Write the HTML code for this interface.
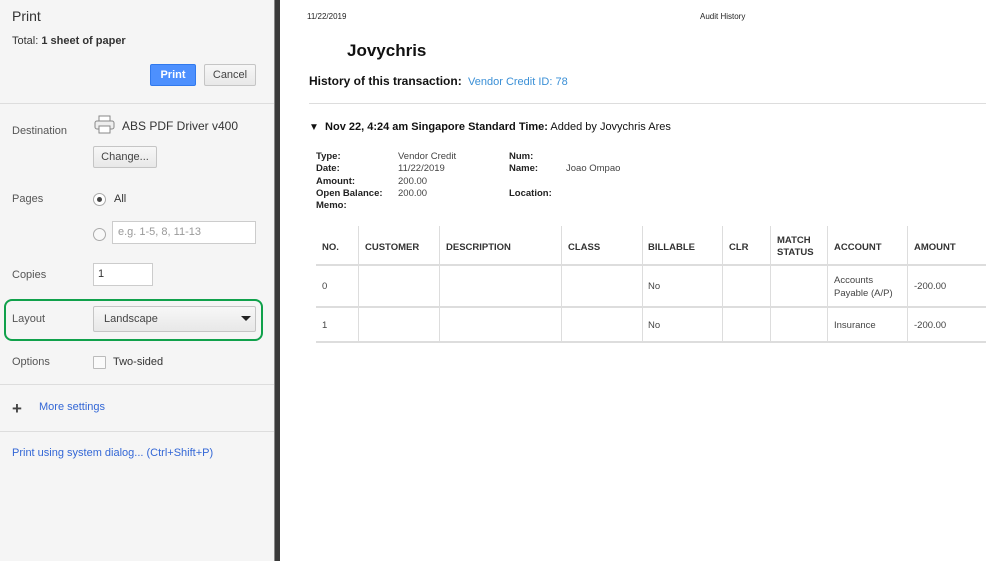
<!DOCTYPE html>
<html><head><style>
body{margin:0;width:988px;height:561px;overflow:hidden;background:#fff;font-family:"Liberation Sans",Arial,sans-serif;position:relative}
.a{position:absolute;white-space:nowrap}
#left{position:absolute;left:0;top:0;width:274px;height:561px;background:#f5f5f5;color:#333;font-size:11px}
.lbl{color:#555}
.btn{position:absolute;border:1px solid #c5c5c5;border-radius:2px;background:linear-gradient(#f7f7f7,#e8e8e8);font-size:11px;color:#444;text-align:center;box-sizing:border-box}
.hr{position:absolute;left:0;width:274px;height:1px;background:#ddd}
.r{font-size:9.5px;color:#444}
.b{font-weight:bold;color:#222}
.th{font-size:9.5px;font-weight:bold;color:#333}
.vl{position:absolute;width:1px;background:#ddd;top:226px;height:116px}
.hl{position:absolute;left:316px;width:670px;height:2px;background:#ddd}
</style></head><body>
<div id="left">
<div class="a" style="left:12px;top:8px;font-size:14px;color:#333">Print</div>
<div class="a" style="left:12px;top:35px">Total: <b>1 sheet of paper</b></div>
<div class="btn" style="left:150px;top:64px;width:46px;height:22px;background:#4d90fe;border-color:#3079ed;color:#fff;font-weight:bold;line-height:20px">Print</div>
<div class="btn" style="left:204px;top:64px;width:52px;height:22px;line-height:20px">Cancel</div>
<div class="hr" style="top:103px"></div>
<div class="a lbl" style="left:12px;top:125px">Destination</div>
<svg class="a" style="left:94px;top:115px" width="22" height="20" viewBox="0 0 22 20"><rect x="5" y="1" width="11" height="5" fill="#fff" stroke="#888"/><rect x="1" y="6" width="19" height="8" rx="2" fill="#eee" stroke="#888"/><rect x="5" y="11" width="11" height="7" fill="#fff" stroke="#888"/></svg>
<div class="a" style="left:122px;top:119px;font-size:12px">ABS PDF Driver v400</div>
<div class="btn" style="left:93px;top:146px;width:64px;height:22px;line-height:20px">Change...</div>
<div class="a lbl" style="left:12px;top:193px">Pages</div>
<div class="a" style="left:93px;top:193px;width:11px;height:11px;border:1px solid #aaa;border-radius:50%;background:#fff"><div style="margin:3px;width:5px;height:5px;border-radius:50%;background:#444"></div></div>
<div class="a" style="left:114px;top:193px">All</div>
<div class="a" style="left:93px;top:228px;width:11px;height:11px;border:1px solid #aaa;border-radius:50%;background:#f8f8f8"></div>
<div class="a" style="left:112px;top:221px;border:1px solid #ccc;background:#fff;color:#999;font-size:11px;line-height:21px;padding-left:5px;box-sizing:border-box;width:144px;height:23px">e.g. 1-5, 8, 11-13</div>
<div class="a lbl" style="left:12px;top:269px">Copies</div>
<div class="a" style="left:93px;top:263px;width:60px;height:23px;border:1px solid #ccc;background:#fff;box-sizing:border-box;padding-left:4px;line-height:21px">1</div>
<div class="a" style="left:4px;top:299px;width:255px;height:38px;border:2px solid #10a14b;border-radius:8px"></div>
<div class="a lbl" style="left:12px;top:313px">Layout</div>
<div class="btn" style="left:93px;top:306px;width:163px;height:26px;text-align:left;padding-left:10px;line-height:24px">Landscape</div>
<div class="a" style="left:241px;top:316px;width:0;height:0;border-left:5px solid transparent;border-right:5px solid transparent;border-top:5px solid #222"></div>
<div class="a lbl" style="left:12px;top:356px">Options</div>
<div class="a" style="left:93px;top:356px;width:11px;height:11px;border:1px solid #bbb;background:#fafafa;border-radius:1px"></div>
<div class="a" style="left:113px;top:356px">Two-sided</div>
<div class="hr" style="top:384px"></div>
<div class="a" style="left:12px;top:399px;font-size:17px;font-weight:bold;color:#444">+</div>
<div class="a" style="left:39px;top:401px;color:#3367d6">More settings</div>
<div class="hr" style="top:431px"></div>
<div class="a" style="left:12px;top:447px;color:#3367d6">Print using system dialog... (Ctrl+Shift+P)</div>
</div>
<div class="a" style="left:274px;top:0;width:6px;height:561px;background:#3a3a3a;border-left:1px solid #888;box-sizing:border-box"></div>
<div class="a" style="left:307px;top:12px;font-size:8px;color:#222">11/22/2019</div>
<div class="a" style="left:700px;top:12px;font-size:8px;color:#222">Audit History</div>
<div class="a" style="left:347px;top:41px;font-size:17px;font-weight:bold;color:#111">Jovychris</div>
<div class="a" style="left:309px;top:74px;font-size:12px;font-weight:bold;color:#111">History of this transaction: <span style="font-weight:normal;color:#3a8fd6;font-size:11px;margin-left:3px">Vendor Credit ID: 78</span></div>
<div class="a" style="left:309px;top:103px;width:677px;height:1px;background:#ddd"></div>
<div class="a" style="left:309px;top:121px;font-size:11px;color:#111"><span style="font-size:10px">▼</span>&nbsp; <b>Nov 22, 4:24 am Singapore Standard Time:</b> Added by Jovychris Ares</div>
<div class="a r b" style="left:316px;top:151px;line-height:12.3px">Type:<br>Date:<br>Amount:<br>Open Balance:<br>Memo:</div>
<div class="a r" style="left:398px;top:151px;line-height:12.3px">Vendor Credit<br>11/22/2019<br>200.00<br>200.00</div>
<div class="a r b" style="left:509px;top:151px;line-height:12.3px">Num:<br>Name:<br><br>Location:</div>
<div class="a r" style="left:566px;top:163px">Joao Ompao</div>
<div class="vl" style="left:358px"></div><div class="vl" style="left:439px"></div><div class="vl" style="left:561px"></div><div class="vl" style="left:642px"></div><div class="vl" style="left:722px"></div><div class="vl" style="left:770px"></div><div class="vl" style="left:827px"></div><div class="vl" style="left:907px"></div>
<div class="hl" style="top:264px"></div><div class="hl" style="top:306px"></div><div class="hl" style="top:341px"></div>
<div class="a th" style="left:322px;top:242px">NO.</div>
<div class="a th" style="left:365px;top:242px">CUSTOMER</div>
<div class="a th" style="left:446px;top:242px">DESCRIPTION</div>
<div class="a th" style="left:568px;top:242px">CLASS</div>
<div class="a th" style="left:648px;top:242px">BILLABLE</div>
<div class="a th" style="left:729px;top:242px">CLR</div>
<div class="a th" style="left:777px;top:235px;line-height:12px">MATCH<br>STATUS</div>
<div class="a th" style="left:834px;top:242px">ACCOUNT</div>
<div class="a th" style="left:914px;top:242px">AMOUNT</div>
<div class="a r" style="left:322px;top:281px">0</div>
<div class="a r" style="left:648px;top:281px">No</div>
<div class="a r" style="left:834px;top:274px;line-height:13px">Accounts<br>Payable (A/P)</div>
<div class="a r" style="left:914px;top:281px">-200.00</div>
<div class="a r" style="left:322px;top:320px">1</div>
<div class="a r" style="left:648px;top:320px">No</div>
<div class="a r" style="left:834px;top:320px">Insurance</div>
<div class="a r" style="left:914px;top:320px">-200.00</div>
</body></html>
